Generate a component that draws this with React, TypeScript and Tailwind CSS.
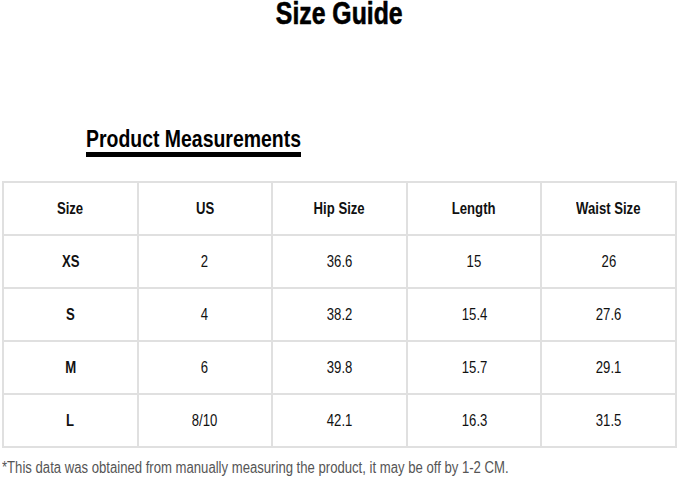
import React from "react";

const sans = "font-['Liberation_Sans',Arial,sans-serif]";

const headers = ["Size", "US", "Hip Size", "Length", "Waist Size"];

const rows = [
  ["XS", "2", "36.6", "15", "26"],
  ["S", "4", "38.2", "15.4", "27.6"],
  ["M", "6", "39.8", "15.7", "29.1"],
  ["L", "8/10", "42.1", "16.3", "31.5"],
];

function Cell({ text, bold }: { text: string; bold?: boolean }) {
  return (
    <div className="h-[51px] bg-white flex items-center justify-center">
      <span
        className={`inline-block scale-x-[0.82] text-[16px] leading-none text-[#111] ${
          bold ? "font-bold" : ""
        }`}
      >
        {text}
      </span>
    </div>
  );
}

export default function App() {
  return (
    <div className={`w-[679px] h-[484px] bg-white overflow-hidden ${sans}`}>
      <h1 className="h-[31px] text-center text-[31px] leading-[28px] font-bold text-black [-webkit-text-stroke:0.6px_black]">
        <span className="inline-block scale-x-[0.8]">Size Guide</span>
      </h1>

      <div className="mt-[96px] ml-[86px]">
        <h2 className="h-[24px] text-[24px] leading-[24px] font-bold text-black whitespace-nowrap">
          <span className="inline-block origin-left scale-x-[0.81]">Product Measurements</span>
        </h2>
        <div className="mt-[1px] w-[215px] h-[5px] bg-black" />
      </div>

      <div className="mt-[24px] ml-[2px] w-[675px] bg-[#e0e0e0] p-[2px] grid grid-cols-5 gap-[2px]">
        {headers.map((h) => (
          <Cell key={h} text={h} bold />
        ))}
        {rows.map((r) =>
          r.map((c, i) => <Cell key={r[0] + i} text={c} bold={i === 0} />)
        )}
      </div>

      <p className="mt-[11px] ml-[2px] text-[16px] leading-[18px] text-[#555] whitespace-nowrap">
        <span className="inline-block origin-left scale-x-[0.82]">
          *This data was obtained from manually measuring the product, it may be off by 1-2 CM.
        </span>
      </p>
    </div>
  );
}
